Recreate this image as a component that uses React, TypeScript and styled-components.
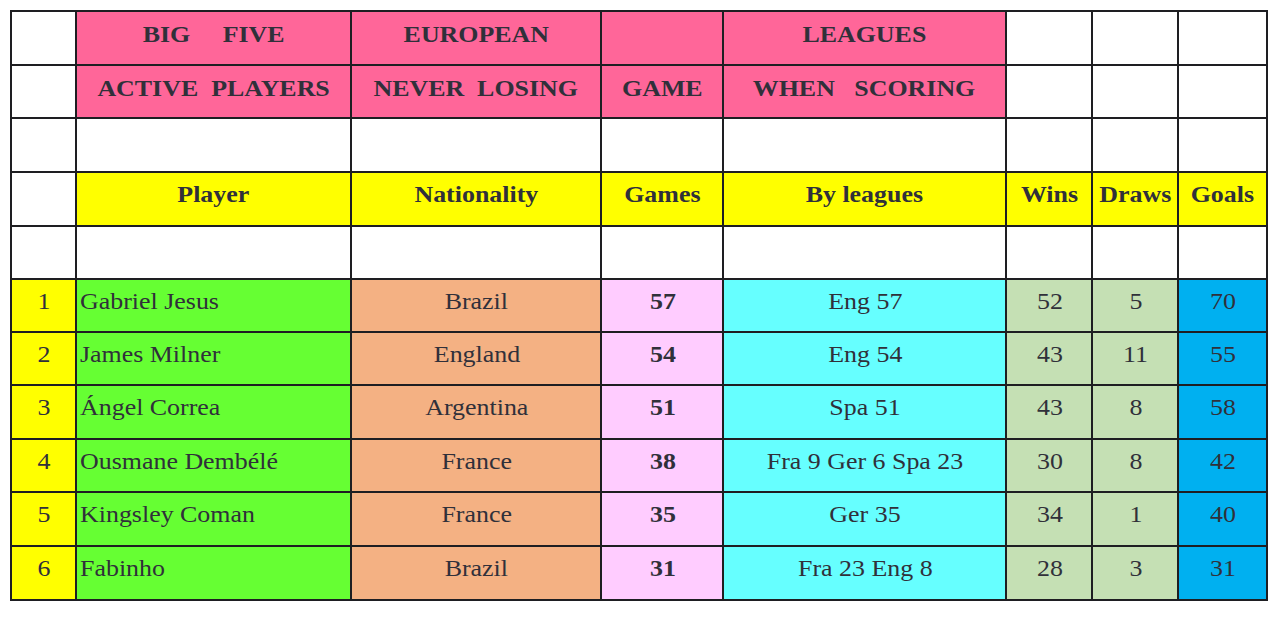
import React from 'react';
import styled, { createGlobalStyle } from 'styled-components';

const GlobalStyle = createGlobalStyle`
  html, body {
    margin: 0;
    padding: 0;
    background: #ffffff;
  }
  body {
    padding: 10px;
    font-family: "Liberation Serif", "Times New Roman", serif;
  }
`;

const COLORS = {
  white: '#ffffff',
  pink: '#ff6699',
  yellow: '#ffff00',
  green: '#66ff33',
  tan: '#f4b183',
  lilac: '#ffccff',
  cyan: '#66ffff',
  sage: '#c5e0b4',
  blue: '#00b0f0',
};

const widths = [65, 275, 250, 122, 283, 86, 86, 89];

type Align = 'left' | 'center';
type Kind = 'title' | 'head' | 'data';

type TCell = {
  text?: string;
  bg?: string;
  align?: Align;
  bold?: boolean;
};

type TRow = {
  kind: Kind;
  height: number;
  cells: TCell[];
};

const blankRow = (height: number): TRow => ({
  kind: 'head',
  height,
  cells: widths.map(() => ({})),
});

const titleRow = (texts: string[], height: number): TRow => ({
  kind: 'title',
  height,
  cells: widths.map((_, i) => ({
    text: texts[i] ?? '',
    bg: i >= 1 && i <= 4 ? COLORS.pink : COLORS.white,
    bold: true,
  })),
});

const players = [
  ['1', 'Gabriel Jesus', 'Brazil', '57', 'Eng 57', '52', '5', '70'],
  ['2', 'James Milner', 'England', '54', 'Eng 54', '43', '11', '55'],
  ['3', 'Ángel Correa', 'Argentina', '51', 'Spa 51', '43', '8', '58'],
  ['4', 'Ousmane Dembélé', 'France', '38', 'Fra 9 Ger 6 Spa 23', '30', '8', '42'],
  ['5', 'Kingsley Coman', 'France', '35', 'Ger 35', '34', '1', '40'],
  ['6', 'Fabinho', 'Brazil', '31', 'Fra 23 Eng 8', '28', '3', '31'],
];
const playerHeights = [53, 53, 54, 53, 54, 54];

const dataColors = [
  COLORS.yellow,
  COLORS.green,
  COLORS.tan,
  COLORS.lilac,
  COLORS.cyan,
  COLORS.sage,
  COLORS.sage,
  COLORS.blue,
];

const rows: TRow[] = [
  titleRow(['', 'BIG     FIVE', 'EUROPEAN', '', 'LEAGUES'], 54),
  titleRow(['', 'ACTIVE  PLAYERS', 'NEVER  LOSING', 'GAME', 'WHEN   SCORING'], 53),
  blankRow(54),
  {
    kind: 'head',
    height: 54,
    cells: ['', 'Player', 'Nationality', 'Games', 'By leagues', 'Wins', 'Draws', 'Goals'].map(
      (text, i) => ({ text, bg: i === 0 ? COLORS.white : COLORS.yellow, bold: true })
    ),
  },
  blankRow(53),
  ...players.map<TRow>((p, r) => ({
    kind: 'data',
    height: playerHeights[r],
    cells: p.map((text, i) => ({
      text,
      bg: dataColors[i],
      align: i === 1 ? 'left' : 'center',
      bold: i === 3,
    })),
  })),
];

const cellPadding: Record<Kind, string> = {
  title: '9px 2px 0',
  head: '8px 2px 0',
  data: '8px 2px 0 3px',
};

const Table = styled.table`
  border-collapse: collapse;
  table-layout: fixed;
  width: 1256px;
  color: #30303a;
`;

const Col = styled.col<{ $w: number }>`
  width: ${(p) => p.$w}px;
`;

const Row = styled.tr<{ $h: number }>`
  height: ${(p) => p.$h}px;
`;

const Cell = styled.td<{ $bg?: string; $align?: Align; $bold?: boolean; $kind: Kind }>`
  border: 2px solid #1e1e22;
  background: ${(p) => p.$bg ?? '#ffffff'};
  text-align: ${(p) => p.$align ?? 'center'};
  font-weight: ${(p) => (p.$bold ? 700 : 400)};
  font-size: 24px;
  white-space: pre;
  vertical-align: top;
  padding: ${(p) => cellPadding[p.$kind]};
  line-height: 27px;
  overflow: hidden;
  box-sizing: border-box;
`;

// the source sheet is a little stretched sideways
const Text = styled.span<{ $align?: Align }>`
  display: inline-block;
  transform: scaleX(1.08);
  transform-origin: ${(p) => (p.$align === 'left' ? 'left center' : 'center center')};
`;

export default function App() {
  return (
    <>
      <GlobalStyle />
      <Table>
        <colgroup>
          {widths.map((w, i) => (
            <Col key={i} $w={w} />
          ))}
        </colgroup>
        <tbody>
          {rows.map((row, r) => (
            <Row key={r} $h={row.height}>
              {row.cells.map((c, i) => (
                <Cell key={i} $bg={c.bg} $align={c.align} $bold={c.bold} $kind={row.kind}>
                  {c.text ? <Text $align={c.align}>{c.text}</Text> : null}
                </Cell>
              ))}
            </Row>
          ))}
        </tbody>
      </Table>
    </>
  );
}
